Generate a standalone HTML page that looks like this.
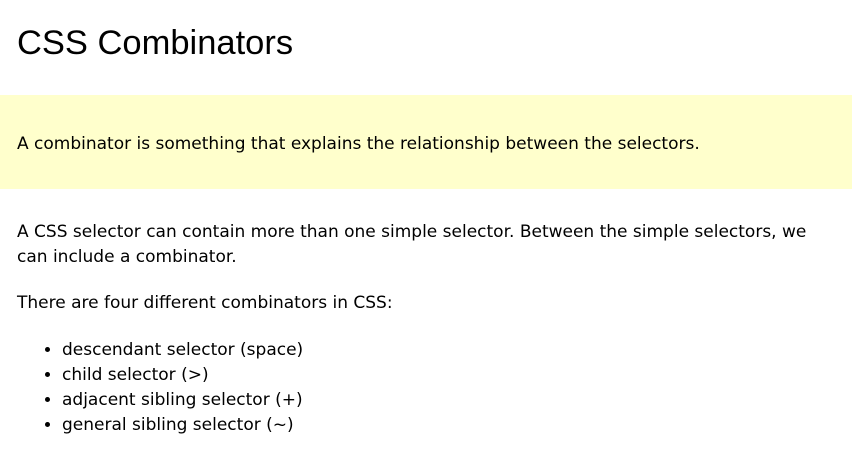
<!DOCTYPE html>
<html><head><meta charset="utf-8"><style>
html,body{margin:0;padding:0;background:#fff;}
body{width:852px;height:453px;overflow:hidden;font-family:"DejaVu Sans",Verdana,sans-serif;font-size:17px;color:#000;}
h1{font-family:"Liberation Sans",sans-serif;font-weight:normal;font-size:34.5px;margin:0;position:absolute;left:17px;top:24px;line-height:38px;}
.note{position:absolute;left:0;top:95px;width:852px;height:94px;background:#ffffcc;}
.note p{position:absolute;left:17px;top:37px;margin:0;line-height:25px;white-space:nowrap;}
.t{position:absolute;left:17px;margin:0;line-height:25px;width:795px;}
ul{position:absolute;left:22px;top:338px;margin:0;padding-left:40px;line-height:25px;}
</style></head><body>
<h1>CSS Combinators</h1>
<div class="note"><p>A combinator is something that explains the relationship between the selectors.</p></div>
<p class="t" style="top:220px">A CSS selector can contain more than one simple selector. Between the simple selectors, we can include a combinator.</p>
<p class="t" style="top:291px">There are four different combinators in CSS:</p>
<ul>
<li>descendant selector (space)</li>
<li>child selector (&gt;)</li>
<li>adjacent sibling selector (+)</li>
<li>general sibling selector (~)</li>
</ul>
</body></html>
